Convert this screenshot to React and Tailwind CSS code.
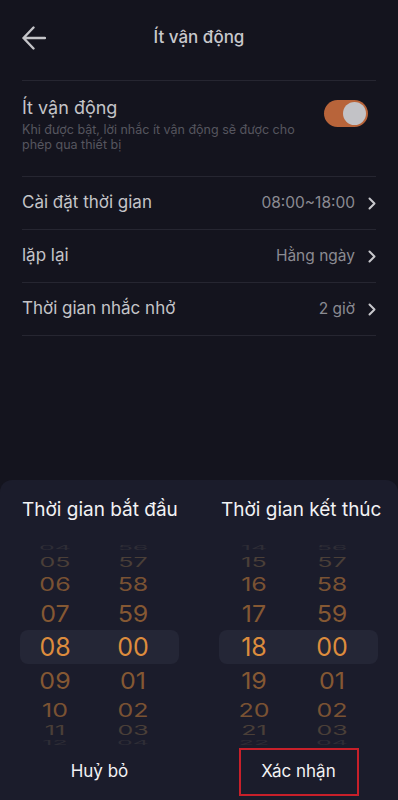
import React from "react";

const settings = [
  { label: "Cài đặt thời gian", value: "08:00~18:00" },
  { label: "lặp lại", value: "Hằng ngày" },
  { label: "Thời gian nhắc nhở", value: "2 giờ" },
];

// wheel rows, from top to bottom; the selected one sits in the middle
const wheel = [
  { cls: "h-[12px] scale-y-[0.25] text-[#2e2d36]" },
  { cls: "h-[16px] scale-y-[0.5] text-[#4a3f38]" },
  { cls: "h-[28px] scale-y-[0.75] text-[#7a5233]" },
  { cls: "h-[32px] scale-y-[0.92] text-[#855833]" },
  { cls: "h-[34px] text-[#dd8c3d]", selected: true },
  { cls: "h-[34px] scale-y-[0.92] text-[#855833]" },
  { cls: "h-[24px] scale-y-[0.75] text-[#7a5233]" },
  { cls: "h-[16px] scale-y-[0.5] text-[#4a3f38]" },
  { cls: "h-[10px] scale-y-[0.25] text-[#2e2d36]" },
];

const pad = (n) => String(n).padStart(2, "0");

function Chevron() {
  return (
    <svg width="8" height="13" viewBox="0 0 8 13" fill="none">
      <path d="M1.5 1.5L6.5 6.5L1.5 11.5" stroke="#c8c8cc" strokeWidth="2" strokeLinecap="round" strokeLinejoin="round" />
    </svg>
  );
}

function Picker({ title, hour }) {
  return (
    <div className="flex-1 basis-0 min-w-0 px-5">
      <div className="pl-0.5 text-[19px] leading-6 text-[#f2f2f4] whitespace-nowrap">{title}</div>
      <div className="mt-5 flex flex-col">
        {wheel.map((row, i) => {
          const h = pad((hour - 4 + i + 24) % 24);
          const m = pad((56 + i) % 60);
          return (
            <div
              key={i}
              className={`flex items-center gap-2 ${row.cls} ${row.selected ? "bg-[#242636] rounded-lg" : ""}`}
            >
              <span className="w-[70px] text-center text-[25px] leading-none">{h}</span>
              <span className="w-[70px] text-center text-[25px] leading-none">{m}</span>
            </div>
          );
        })}
      </div>
    </div>
  );
}

export default function App() {
  return (
    <div className="w-[398px] h-[800px] bg-[#14141e] flex flex-col overflow-hidden" style={{ fontFamily: "Inter, 'Noto Sans', sans-serif" }}>
      {/* Header */}
      <div className="h-[80px] flex items-center pb-1 px-[22px]">
        <svg width="24" height="24" viewBox="0 0 24 24" fill="none">
          <path d="M23 12H1.5M11.5 1.5L1.5 12L11.5 22.5" stroke="#c4c4c8" strokeWidth="2.4" strokeLinecap="round" strokeLinejoin="round" />
        </svg>
        <div className="flex-1 text-center text-[17px] font-medium text-[#c8c8cc]">Ít vận động</div>
        <div className="w-6" />
      </div>

      {/* Settings list */}
      <div className="mx-[22px]">
        <div className="h-[96px] border-t border-[#262631] flex items-start pt-[15px]">
          <div className="flex-1">
            <div className="text-[18px] leading-6 text-[#c4c4c8]">Ít vận động</div>
            <div className="mt-[2px] text-[12.5px] leading-[15px] text-[#56565f]">
              Khi được bật, lời nhắc ít vận động sẽ được cho phép qua thiết bị
            </div>
          </div>
          <div className="mt-[4px] mr-2 ml-3 shrink-0 w-[44px] h-[27px] rounded-full bg-[#b8643a] flex items-center justify-end pr-[2px]">
            <div className="w-[23px] h-[23px] rounded-full bg-[#c2c2c6]" />
          </div>
        </div>
        {settings.map((s) => (
          <div key={s.label} className="h-[53px] border-t border-[#262631] flex items-center">
            <div className="flex-1 text-[17px] text-[#c4c4c8]">{s.label}</div>
            <div className="text-[15.5px] text-[#8b8b92] mr-[13px]">{s.value}</div>
            <Chevron />
          </div>
        ))}
        <div className="border-t border-[#262631]" />
      </div>

      <div className="flex-1" />

      {/* Bottom sheet */}
      <div className="h-[320px] bg-[#1b1c2b] rounded-t-xl flex flex-col pt-[18px]">
        <div className="flex">
          <Picker title="Thời gian bắt đầu" hour={8} />
          <Picker title="Thời gian kết thúc" hour={18} />
        </div>
        <div className="flex h-[52px]">
          <div className="flex-1 flex items-start justify-center">
            <div className="h-[48px] flex items-center text-[17px] text-[#f2f2f4]">Huỷ bỏ</div>
          </div>
          <div className="flex-1 flex items-start justify-center">
            <div className="w-[120px] h-[48px] border-2 border-[#c8202a] flex items-center justify-center text-[17px] text-[#f2f2f4]">
              Xác nhận
            </div>
          </div>
        </div>
      </div>
    </div>
  );
}
